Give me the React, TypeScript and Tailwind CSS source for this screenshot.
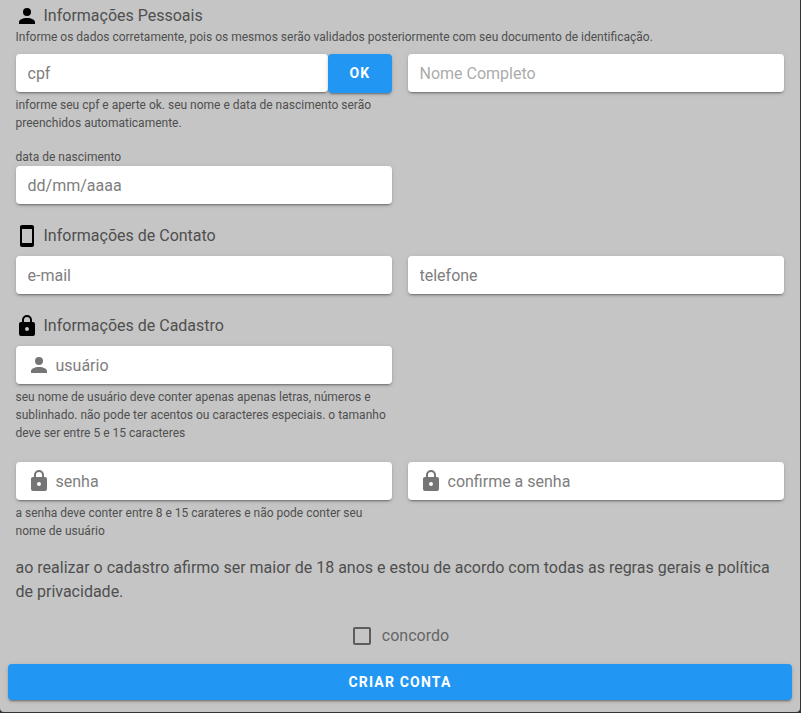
import { useState } from "react";
import clsx from "clsx";

const ICONS = {
  account:
    "M12,4A4,4 0 0,1 16,8A4,4 0 0,1 12,12A4,4 0 0,1 8,8A4,4 0 0,1 12,4M12,14C16.42,14 20,15.79 20,18V20H4V18C4,15.79 7.58,14 12,14Z",
  cellphone:
    "M17,19H7V5H17M17,1H7C5.89,1 5,1.89 5,3V21A2,2 0 0,0 7,23H17A2,2 0 0,0 19,21V3C19,1.89 18.1,1 17,1Z",
  lock: "M12,17A2,2 0 0,0 14,15C14,13.89 13.1,13 12,13A2,2 0 0,0 10,15A2,2 0 0,0 12,17M18,8A2,2 0 0,1 20,10V20A2,2 0 0,1 18,22H6A2,2 0 0,1 4,20V10C4,8.89 4.9,8 6,8H7V6A5,5 0 0,1 12,1A5,5 0 0,1 17,6V8H18M12,3A3,3 0 0,0 9,6V8H15V6A3,3 0 0,0 12,3Z",
  checkbox:
    "M19,3H5C3.89,3 3,3.89 3,5V19A2,2 0 0,0 5,21H19A2,2 0 0,0 21,19V5C21,3.89 20.1,3 19,3M19,5V19H5V5H19Z",
  checkboxMarked:
    "M10,17L5,12L6.41,10.58L10,14.17L17.59,6.58L19,8M19,3H5C3.89,3 3,3.89 3,5V19A2,2 0 0,0 5,21H19A2,2 0 0,0 21,19V5C21,3.89 20.1,3 19,3Z",
};

type IconName = keyof typeof ICONS;

const Icon = ({ name, className }: { name: IconName; className?: string }) => (
  <svg
    viewBox="0 0 24 24"
    className={clsx("size-6 shrink-0 overflow-visible", className)}
  >
    <path fill="currentColor" d={ICONS[name]} />
  </svg>
);

const elevation =
  "shadow-[0_3px_1px_-2px_rgba(0,0,0,0.2),0_2px_2px_0_rgba(0,0,0,0.14),0_1px_5px_0_rgba(0,0,0,0.12)]";

const Heading = ({ icon, title }: { icon: IconName; title: string }) => (
  <h2 className="-ml-px flex h-6 items-center text-base text-[#4f4f4f]">
    <Icon name={icon} className="mr-[4.5px] text-black" />
    <span>{title}</span>
  </h2>
);

const Field = ({
  placeholder,
  icon,
  type = "text",
  disabled = false,
}: {
  placeholder: string;
  icon?: IconName;
  type?: string;
  disabled?: boolean;
}) => (
  <div
    className={clsx(
      "flex h-[38px] min-w-0 flex-1 items-center rounded bg-white pr-3 pl-[11.5px]",
      elevation
    )}
  >
    {icon && (
      <Icon name={icon} className="-ml-[0.5px] mr-[4.5px] text-[#757575]" />
    )}
    <input
      type={type}
      placeholder={placeholder}
      disabled={disabled}
      className={clsx(
        "w-full min-w-0 bg-transparent pt-0.5 text-base text-black/85 outline-none",
        disabled ? "placeholder:text-[#acacac]" : "placeholder:text-[#7e7e7e]"
      )}
    />
  </div>
);

const Hint = ({ children }: { children: React.ReactNode }) => (
  <p className="-ml-[0.5px] mt-1 text-xs leading-[18px] text-[#4f4f4f]">
    {children}
  </p>
);

export default function App() {
  const [agreed, setAgreed] = useState(false);

  return (
    <div className="h-[713px] w-[801px] bg-[#333333] pr-px pb-px font-[Roboto,sans-serif]">
      <form
        className="h-full rounded-b bg-[#c5c5c5] pt-1"
        onSubmit={(e) => e.preventDefault()}
      >
        {/* Dados pessoais */}
        <section className="px-4">
          <Heading icon="account" title="Informações Pessoais" />
          <p className="-ml-[0.5px] text-xs leading-[18px] text-[#4f4f4f]">
            Informe os dados corretamente, pois os mesmos serão validados
            posteriormente com seu documento de identificação.
          </p>
          <div className="mt-2 grid grid-cols-2 gap-x-4">
            <div>
              <div className="flex h-[38px] items-start">
                <Field placeholder="cpf" />
                <button
                  type="button"
                  className={clsx(
                    "h-[39px] w-16 rounded bg-[#2196f3] pb-px text-sm font-bold tracking-[0.085em] text-white",
                    elevation
                  )}
                >
                  OK
                </button>
              </div>
              <Hint>
                informe seu cpf e aperte ok. seu nome e data de nascimento serão
                preenchidos automaticamente.
              </Hint>
            </div>
            <div className="flex items-start">
              <Field placeholder="Nome Completo" disabled />
            </div>
            <div className="mt-4">
              <label className="-ml-[0.5px] block text-xs leading-[18px] text-[#4f4f4f]">
                data de nascimento
              </label>
              <Field placeholder="dd/mm/aaaa" />
            </div>
          </div>
        </section>

        {/* Contato */}
        <section className="mt-5 px-4">
          <Heading icon="cellphone" title="Informações de Contato" />
          <div className="mt-2 grid grid-cols-2 gap-x-4">
            <Field placeholder="e-mail" type="email" />
            <Field placeholder="telefone" type="tel" />
          </div>
        </section>

        {/* Cadastro */}
        <section className="mt-5 px-4">
          <Heading icon="lock" title="Informações de Cadastro" />
          <div className="mt-2 grid grid-cols-2 gap-x-4 gap-y-5">
            <div>
              <Field placeholder="usuário" icon="account" />
              <Hint>
                seu nome de usuário deve conter apenas apenas letras, números e
                sublinhado. não pode ter acentos ou caracteres especiais. o
                tamanho deve ser entre 5 e 15 caracteres
              </Hint>
            </div>
            <div className="col-start-1">
              <Field placeholder="senha" icon="lock" type="password" />
              <Hint>
                a senha deve conter entre 8 e 15 carateres e não pode conter seu
                nome de usuário
              </Hint>
            </div>
            <div>
              <Field placeholder="confirme a senha" icon="lock" type="password" />
            </div>
          </div>
        </section>

        <p className="mt-4 pr-4 pl-[15.5px] text-base text-[#4f4f4f]">
          ao realizar o cadastro afirmo ser maior de 18 anos e estou de acordo
          com todas as regras gerais e política de privacidade.
        </p>

        <button
          type="button"
          role="checkbox"
          aria-checked={agreed}
          onClick={() => setAgreed(!agreed)}
          className="mx-auto mt-5 flex h-6 items-center text-base text-[#666666]"
        >
          <Icon
            name={agreed ? "checkboxMarked" : "checkbox"}
            className="-ml-px mr-2 text-[#5c5c5c]"
          />
          <span>concordo</span>
        </button>

        <div className="mt-4 px-2">
          <button
            type="submit"
            className={clsx(
              "h-9 w-full rounded bg-[#2196f3] text-sm font-bold tracking-[0.085em] text-white",
              elevation
            )}
          >
            CRIAR CONTA
          </button>
        </div>
      </form>
    </div>
  );
}
